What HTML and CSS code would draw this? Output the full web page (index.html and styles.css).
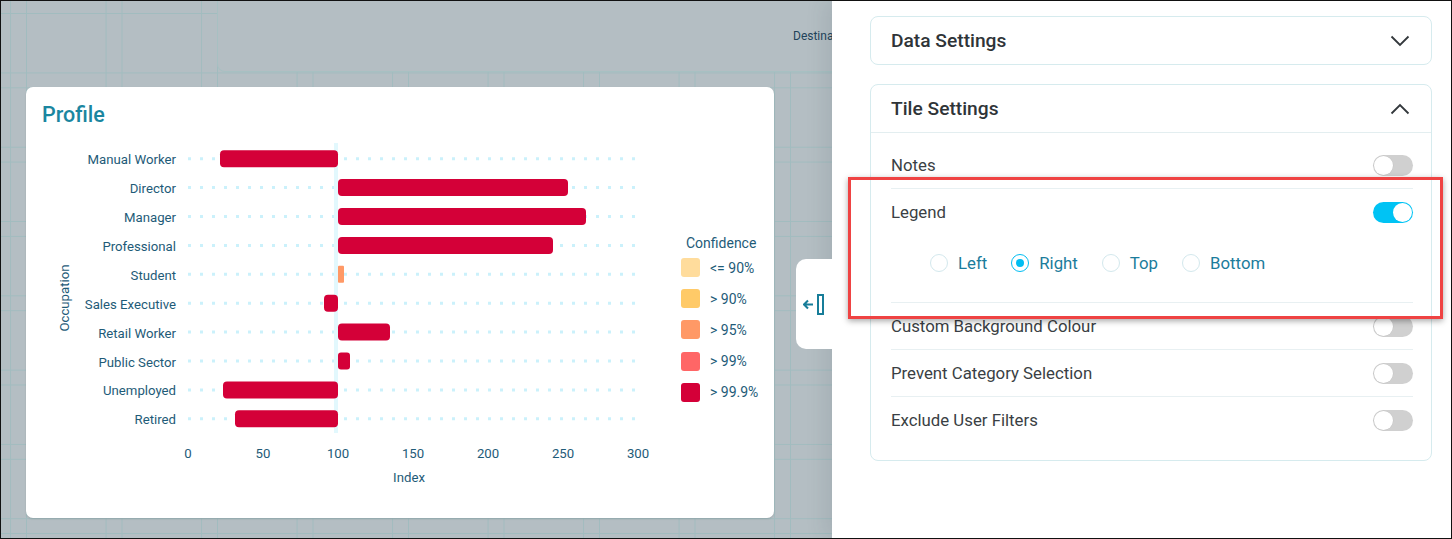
FILE: index.html
```html
<!DOCTYPE html>
<html lang="en">
<head>
<meta charset="utf-8">
<title>Profile – Tile Settings</title>
<link rel="stylesheet" href="styles.css">
</head>
<body>
<div class="frame">
  <main class="canvas">
    <div class="tile-top"><span class="tile-top__text">Destination</span></div>
    <section class="card">
      <h2 class="card__title">Profile</h2>
      <div class="card__body">
        <svg class="chart" width="655" height="370" viewBox="0 0 655 370">
          <g class="chart__grid">
            <line x1="162" x2="612" y1="23.7" y2="23.7"/>
            <line x1="162" x2="612" y1="52.6" y2="52.6"/>
            <line x1="162" x2="612" y1="81.5" y2="81.5"/>
            <line x1="162" x2="612" y1="110.4" y2="110.4"/>
            <line x1="162" x2="612" y1="139.3" y2="139.3"/>
            <line x1="162" x2="612" y1="168.2" y2="168.2"/>
            <line x1="162" x2="612" y1="197.1" y2="197.1"/>
            <line x1="162" x2="612" y1="226" y2="226"/>
            <line x1="162" x2="612" y1="254.9" y2="254.9"/>
            <line x1="162" x2="612" y1="283.8" y2="283.8"/>
          </g>
          <line class="chart__base" x1="310" x2="310" y1="8" y2="298"/>
          <g class="chart__bars">
            <rect x="194" y="15.2" width="118" height="17" rx="4"/>
            <rect x="312" y="44.1" width="230" height="17" rx="4"/>
            <rect x="312" y="73" width="248" height="17" rx="4"/>
            <rect x="312" y="101.9" width="215" height="17" rx="4"/>
            <rect class="chart__bar--c3" x="312" y="130.8" width="6" height="17" rx="1"/>
            <rect x="298" y="159.7" width="14" height="17" rx="4"/>
            <rect x="312" y="188.6" width="52" height="17" rx="4"/>
            <rect x="312" y="217.5" width="12" height="17" rx="3"/>
            <rect x="197" y="246.4" width="115" height="17" rx="4"/>
            <rect x="209" y="275.3" width="103" height="17" rx="4"/>
          </g>
          <g class="chart__labels">
            <text x="150" y="24.7">Manual Worker</text>
            <text x="150" y="53.6">Director</text>
            <text x="150" y="82.5">Manager</text>
            <text x="150" y="111.4">Professional</text>
            <text x="150" y="140.3">Student</text>
            <text x="150" y="169.2">Sales Executive</text>
            <text x="150" y="198.1">Retail Worker</text>
            <text x="150" y="227">Public Sector</text>
            <text x="150" y="255.9">Unemployed</text>
            <text x="150" y="284.8">Retired</text>
          </g>
          <g class="chart__ticks">
            <text x="162" y="318">0</text>
            <text x="237" y="318">50</text>
            <text x="312" y="318">100</text>
            <text x="387" y="318">150</text>
            <text x="462" y="318">200</text>
            <text x="537" y="318">250</text>
            <text x="612" y="318">300</text>
            <text x="383" y="342">Index</text>
          </g>
          <text class="chart__ytitle" transform="translate(38 163) rotate(-90)">Occupation</text>
        </svg>
        <div class="legend">
          <div class="legend__title">Confidence</div>
          <ul class="legend__list">
            <li class="legend__item"><span class="legend__swatch legend__swatch--c1"></span>&lt;= 90%</li>
            <li class="legend__item"><span class="legend__swatch legend__swatch--c2"></span>&gt; 90%</li>
            <li class="legend__item"><span class="legend__swatch legend__swatch--c3"></span>&gt; 95%</li>
            <li class="legend__item"><span class="legend__swatch legend__swatch--c4"></span>&gt; 99%</li>
            <li class="legend__item"><span class="legend__swatch legend__swatch--c5"></span>&gt; 99.9%</li>
          </ul>
        </div>
      </div>
    </section>
  </main>

  <aside class="panel">
    <section class="acc">
      <div class="acc__head">
        <span>Data Settings</span>
        <svg class="acc__chev" width="20" height="12" viewBox="0 0 20 12"><path d="M1.5 1.5 L10 10 L18.5 1.5"/></svg>
      </div>
    </section>
    <section class="acc acc--open">
      <div class="acc__head">
        <span>Tile Settings</span>
        <svg class="acc__chev" width="20" height="12" viewBox="0 0 20 12"><path d="M1.5 10.5 L10 2 L18.5 10.5"/></svg>
      </div>
      <div class="acc__body">
        <div class="row">
          <span>Notes</span>
          <span class="toggle"><span class="toggle__knob"></span></span>
        </div>
        <div class="group">
          <div class="row row--plain">
            <span>Legend</span>
            <span class="toggle toggle--on"><span class="toggle__knob"></span></span>
          </div>
          <div class="options">
            <span class="radio"><span class="radio__dot"></span>Left</span>
            <span class="radio radio--on"><span class="radio__dot"></span>Right</span>
            <span class="radio"><span class="radio__dot"></span>Top</span>
            <span class="radio"><span class="radio__dot"></span>Bottom</span>
          </div>
        </div>
        <div class="row">
          <span>Custom Background Colour</span>
          <span class="toggle"><span class="toggle__knob"></span></span>
        </div>
        <div class="row">
          <span>Prevent Category Selection</span>
          <span class="toggle"><span class="toggle__knob"></span></span>
        </div>
        <div class="row row--plain">
          <span>Exclude User Filters</span>
          <span class="toggle"><span class="toggle__knob"></span></span>
        </div>
      </div>
    </section>
    <div class="highlight"></div>
  </aside>

  <button class="collapse-tab" type="button" aria-label="Collapse">
    <svg width="22" height="23" viewBox="0 0 22 23"><path d="M1 11.5 H10 M5 7.5 L1 11.5 L5 15.5"/><rect x="15" y="2" width="5" height="19"/></svg>
  </button>
</div>
</body>
</html>
```

FILE: styles.css
```css
* { box-sizing: border-box; }

html, body {
  margin: 0;
  padding: 0;
  background: #fff;
}

body {
  font-family: Roboto, "Liberation Sans", Arial, sans-serif;
}

.frame {
  position: relative;
  width: 1452px;
  height: 539px;
  border: 1px solid #111;
  display: flex;
  overflow: hidden;
}

/* ---------- left dashboard canvas ---------- */
.canvas {
  width: 831px;
  flex: none;
  display: flex;
  flex-direction: column;
  overflow: hidden;
  background-color: #b4bec3;
  background-image:
    linear-gradient(to right, #a1bcbf 0 1px, transparent 1px 80px, #a1bcbf 80px 81px, transparent 81px),
    linear-gradient(to bottom, #a1bcbf 0 1px, transparent 1px 59px, #a1bcbf 59px 60px, transparent 60px);
  background-size: 95.5px 100%, 100% 74.3px;
  background-position: 25px 0, 0 12px;
}

.tile-top {
  margin-left: 216px;
  width: 700px;
  height: 71px;
  flex: none;
  display: flex;
  align-items: center;
  background: #b4bec3;
  border: 1px solid #a7c0c2;
  border-top: none;
  border-right: none;
  border-radius: 0 0 0 8px;
}

.tile-top__text {
  margin-left: 575px;
  font-size: 12px;
  color: #22435a;
  white-space: nowrap;
}

.card {
  margin: 15px 0 0 25px;
  width: 748px;
  height: 431px;
  flex: none;
  background: #fff;
  border-radius: 7px;
  box-shadow: 0 1px 2px rgba(0, 0, 0, 0.12);
}

.card__title {
  margin: 0;
  padding: 16px 16px 0;
  height: 48px;
  font-size: 21.5px;
  line-height: 24px;
  font-weight: 500;
  color: #1b86a0;
}

.card__body {
  display: flex;
  align-items: flex-start;
}

.chart {
  display: block;
  flex: none;
  font-family: Roboto, "Liberation Sans", Arial, sans-serif;
  font-size: 13.2px;
}

.chart__grid line {
  stroke: #cbf1fb;
  stroke-width: 3;
  stroke-dasharray: 3 9;
}

.chart__base {
  stroke: #e2f8fd;
  stroke-width: 4;
}

.chart__bars rect { fill: #d40038; }
.chart__bars .chart__bar--c3 { fill: #ff9966; }

.chart__labels text {
  fill: #1e5b78;
  text-anchor: end;
  dominant-baseline: central;
}

.chart__ticks text {
  fill: #1e5b78;
  text-anchor: middle;
  dominant-baseline: central;
}

.chart__ytitle {
  fill: #1e5b78;
  text-anchor: middle;
  dominant-baseline: central;
}

.legend {
  margin-top: 100px;
  display: flex;
  flex-direction: column;
  color: #1e5b78;
  font-size: 14px;
}

.legend__title {
  text-align: center;
  line-height: 16px;
  margin-left: 3px;
}

.legend__list {
  list-style: none;
  margin: 7px 0 0;
  padding: 0;
  display: flex;
  flex-direction: column;
  gap: 12.2px;
}

.legend__item {
  display: flex;
  align-items: center;
  gap: 10px;
  height: 19px;
  white-space: nowrap;
}

.legend__swatch {
  width: 19px;
  height: 19px;
  border-radius: 3px;
  flex: none;
}
.legend__swatch--c1 { background: #ffdc9c; }
.legend__swatch--c2 { background: #ffca68; }
.legend__swatch--c3 { background: #ff9966; }
.legend__swatch--c4 { background: #ff6666; }
.legend__swatch--c5 { background: #d40038; }

/* ---------- collapse tab ---------- */
.collapse-tab {
  position: absolute;
  left: 795px;
  top: 258px;
  width: 44px;
  height: 90px;
  padding: 0 0 0 7px;
  margin: 0;
  border: none;
  border-radius: 10px 0 0 10px;
  background: #fff;
  display: flex;
  align-items: center;
  z-index: 3;
}

.collapse-tab svg {
  display: block;
  fill: none;
  stroke: #177d99;
  stroke-width: 2;
}

/* ---------- settings panel ---------- */
.panel {
  flex: 1;
  position: relative;
  z-index: 2;
  background: #fff;
  padding: 15px 19px 0 38px;
  box-shadow: -8px 0 18px rgba(40, 60, 70, 0.10);
}

.acc {
  border: 1px solid #d6ebee;
  border-radius: 8px;
  background: #fff;
}

.acc + .acc { margin-top: 19px; }

.acc__head {
  height: 47px;
  padding: 0 21px 0 20px;
  display: flex;
  align-items: center;
  justify-content: space-between;
  font-size: 19.2px;
  font-weight: 500;
  color: #2f3438;
}

.acc--open .acc__head {
  height: 48px;
  border-bottom: 1px solid #e3eef0;
}

.acc__chev {
  display: block;
  fill: none;
  stroke: #33383c;
  stroke-width: 1.8;
}

.acc__body {
  padding: 9px 18px 17px 20px;
}

.row {
  height: 47px;
  display: flex;
  align-items: center;
  justify-content: space-between;
  border-bottom: 1px solid #e8f0f2;
  font-size: 16.8px;
  color: #3a3f44;
}

.row--plain {
  height: 46px;
  border-bottom: none;
}

.group {
  border-bottom: 1px solid #e8f0f2;
  padding-bottom: 29px;
}

.options {
  margin: 18px 0 0 39px;
  display: flex;
  align-items: center;
  gap: 24px;
  height: 20px;
}

.radio {
  display: flex;
  align-items: center;
  gap: 10px;
  font-size: 16.8px;
  color: #1b7c9c;
}

.radio__dot {
  width: 18px;
  height: 18px;
  border-radius: 50%;
  border: 1px solid #d3e8ed;
  display: flex;
  align-items: center;
  justify-content: center;
  flex: none;
}

.radio--on .radio__dot {
  border: 1.5px solid #00bdf2;
}

.radio--on .radio__dot::after {
  content: "";
  width: 8px;
  height: 8px;
  border-radius: 50%;
  background: #00bdf2;
}

.toggle {
  width: 40px;
  height: 21px;
  border-radius: 11px;
  background: #d0d0d0;
  padding: 1px;
  display: flex;
  justify-content: flex-start;
  flex: none;
}

.toggle--on {
  background: #00c3f4;
  justify-content: flex-end;
}

.toggle__knob {
  width: 19px;
  height: 19px;
  border-radius: 50%;
  background: #fff;
  box-shadow: 0 0 0 0.5px #c4c4c4;
}

.toggle--on .toggle__knob {
  box-shadow: none;
}

.highlight {
  position: absolute;
  left: 16px;
  top: 176px;
  width: 595px;
  height: 142px;
  border: 3px solid #ef4343;
  box-shadow: 0 2px 6px rgba(0, 0, 0, 0.35);
  pointer-events: none;
}
```
